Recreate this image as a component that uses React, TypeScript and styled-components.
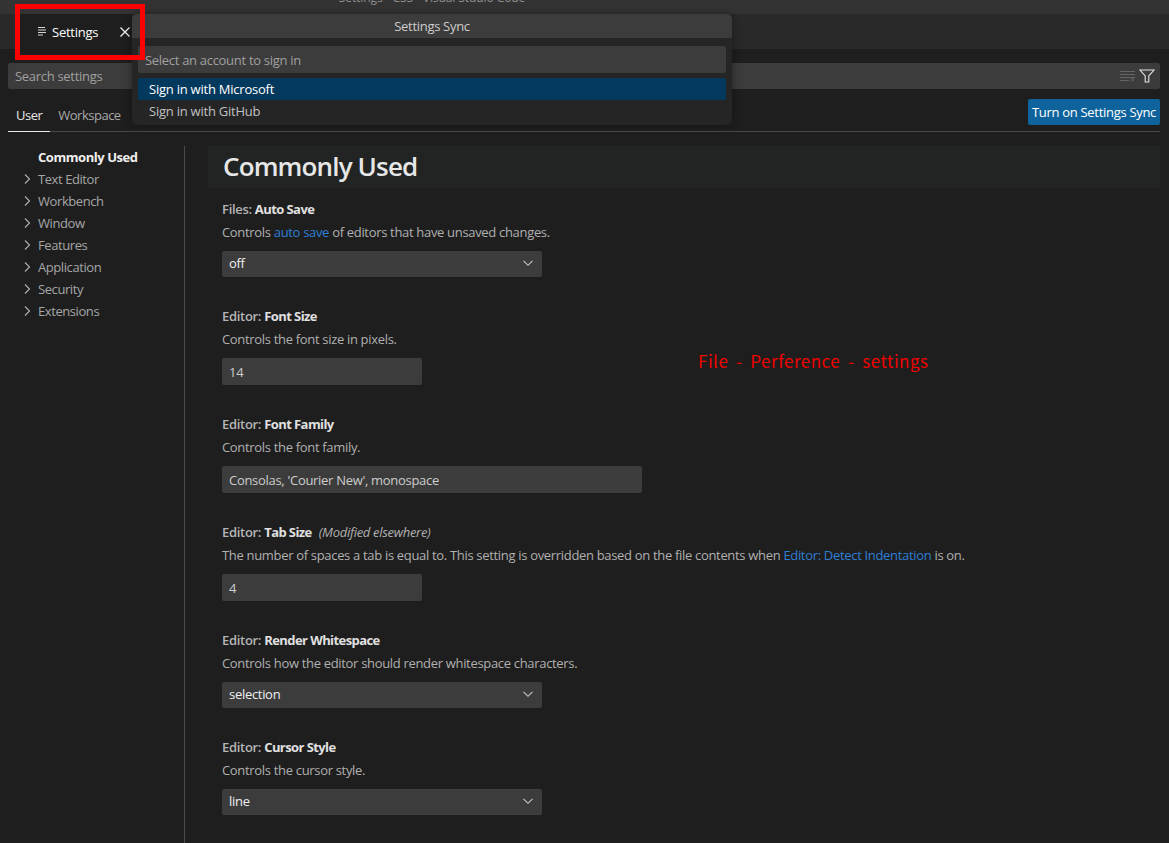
import React from "react";
import styled, { createGlobalStyle } from "styled-components";

const Global = createGlobalStyle`
  html, body { margin: 0; padding: 0; background: #1e1e1e; }
  body { font-family: "Open Sans", "Noto Sans", sans-serif; font-size: 13px; color: #cccccc; overflow: hidden; }
  * { box-sizing: border-box; }
`;
const Page = styled.div`position: relative; width: 1169px; height: 843px; overflow: hidden; background: #1e1e1e; display: flex; flex-direction: column;`;
const TitleBar = styled.div`height: 14px; flex: none; background: #333333; overflow: hidden; display: flex; justify-content: center; padding-right: 305px; color: #8f8f8f; font-size: 12px; line-height: 14px; letter-spacing: -0.08px;`;
const TitleText = styled.span`margin-top: -9px;`;
const TabStrip = styled.div`height: 35px; flex: none; background: #292929; display: flex; padding-left: 19px;`;
const Tab = styled.div`width: 113px; background: #1e1e1e; color: #fff; display: flex; align-items: center; padding-left: 18px; gap: 5px; font-size: 13px; letter-spacing: -0.25px;`;
const TabClose = styled.span`margin-left: 14px; display: flex; flex: none;`;
const Editor = styled.div`flex: 1; min-height: 0; padding: 14px 9px 0 8px; display: flex; flex-direction: column;`;
const SearchBar = styled.div`height: 26px; flex: none; background: #3c3c3c; border-radius: 2px; display: flex; align-items: center; padding: 0 5px 0 7px; color: #a0a0a0; letter-spacing: -0.3px;`;
const SearchText = styled.span`flex: 1;`;
const SearchIcons = styled.div`display: flex; gap: 3px; align-items: center;`;
const TabsRow = styled.div`height: 43px; flex: none; border-bottom: 1px solid #484848; display: flex; align-items: flex-end; justify-content: space-between;`;
const ScopeTabs = styled.div`display: flex; align-self: stretch; align-items: flex-end;`;
const ScopeTab = styled.div<{ $active?: boolean }>`height: 32px; padding: 5px 8px 0; color: ${p => p.$active ? "#e7e7e7" : "#a8a8a8"}; letter-spacing: -0.5px; margin-bottom: -1px; border-bottom: 1px solid ${p => p.$active ? "#e7e7e7" : "transparent"}; line-height: 20px;`;
const SyncButton = styled.div`width: 132px; height: 26px; margin-bottom: 6px; background: #0e639c; color: #fff; border-radius: 2px; display: flex; align-items: center; justify-content: center; white-space: nowrap; letter-spacing: -0.3px;`;
const Body = styled.div`flex: 1; display: flex; margin-top: 14px; min-height: 0;`;
const Tree = styled.div`width: 177px; flex: none; border-right: 1px solid #4a4a4a;`;
const TreeHead = styled.div`height: 22px; padding-left: 30px; line-height: 22px; color: #f0f0f0; font-weight: 700; letter-spacing: -0.45px;`;
const TreeRow = styled.div`height: 22px; display: flex; align-items: center; padding-left: 11px; color: #a6a6a6; letter-spacing: -0.42px; line-height: 22px;`;
const Twist = styled.span`width: 19px; display: flex; color: #b0b0b0;`;
const Content = styled.div`flex: 1; padding-left: 23px; min-width: 0;`;
const SectionHeader = styled.h2`margin: 0; height: 42px; background: #212423; font-size: 26px; font-weight: 600; color: #e7e7e7; padding-left: 15px; line-height: 41px; letter-spacing: -0.85px;`;
const List = styled.div`padding: 10px 0 0 14px; display: flex; flex-direction: column;`;
const Setting = styled.div<{ $h: number }>`height: ${p => p.$h}px; flex: none; display: flex; flex-direction: column; align-items: flex-start;`;
const Label = styled.div`height: 22px; line-height: 22px; font-weight: 600; color: #b5b5b5; letter-spacing: -0.3px; white-space: nowrap;`;
const LabelStrong = styled.span`color: #e0e0e0; font-weight: 700; letter-spacing: -0.58px;`;
const Note = styled.em`font-weight: 400; font-size: 13px; color: #b0b0b0; margin-left: 7px; letter-spacing: -0.3px;`;
const Desc = styled.div`height: 22px; line-height: 22px; margin-top: 1px; color: #b0b0b0; letter-spacing: -0.32px; white-space: nowrap;`;
const Link = styled.span`color: #2f7fd6;`;
const Select = styled.div`width: 320px; height: 26px; margin-top: 8px; background: #3c3c3c; border-radius: 2px; display: flex; align-items: center; justify-content: space-between; padding: 0 6px 2px 7px; color: #f0f0f0; letter-spacing: -0.3px;`;
const TextBox = styled.div<{ $w: number }>`width: ${p => p.$w}px; height: 27px; margin-top: 8px; background: #3c3c3c; border-radius: 2px; display: flex; align-items: center; padding: 0 7px; color: #cccccc; letter-spacing: -0.3px; white-space: nowrap;`;
const Annotation = styled.div`position: absolute; left: 698px; top: 349px; color: #f00000; font-family: "Noto Sans CJK KR", "Noto Sans", sans-serif; font-size: 17px; line-height: 23px; letter-spacing: 0.5px; word-spacing: 3.5px; white-space: pre;`;
const RedBox = styled.div`position: absolute; left: 15px; top: 4px; width: 130px; height: 56px; border: 5px solid #ff0000; z-index: 3;`;
const Picker = styled.div`position: absolute; left: 132px; top: 14px; width: 600px; height: 111px; background: #252526; border-radius: 5px; box-shadow: 0 0 8px rgba(0,0,0,.36); overflow: hidden; z-index: 2;`;
const PickerTitle = styled.div`height: 24px; background: #3c3c3c; color: #cccccc; text-align: center; line-height: 25px; letter-spacing: -0.3px;`;
const PickerInput = styled.div`height: 27px; margin: 8px 6px 5px; background: #3c3c3c; border-radius: 2px; padding: 0 7px; line-height: 28px; color: #a0a0a0; letter-spacing: -0.3px;`;
const PickerRow = styled.div<{ $on?: boolean }>`height: 22px; margin: 0 6px; padding-left: 11px; line-height: 22px; border-radius: 2px; background: ${p => p.$on ? "#04395e" : "transparent"}; color: ${p => p.$on ? "#fff" : "#c0c0c0"}; letter-spacing: -0.23px;`;
const TabGlyph = styled.svg`flex: none;`;

const Chevron = () => (
  <svg width="16" height="16" viewBox="0 0 16 16" fill="none" stroke="currentColor" strokeWidth="1.1"><path d="M6 3.5 10.5 8 6 12.5" /></svg>
);
const Down = () => (
  <svg width="16" height="16" viewBox="0 0 16 16" fill="none" stroke="#c8c8c8" strokeWidth="1.1"><path d="M3.5 5.8 8 10.3l4.5-4.5" /></svg>
);
const ListIcon = () => (
  <TabGlyph width="10" height="11" viewBox="0 0 10 11" stroke="#d4d4d4" strokeWidth="1.1" fill="none"><path d="M1 1.5h7M1 4h8M1 6.5h8M1 9h5" /></TabGlyph>
);
const CloseIcon = () => (
  <svg width="16" height="16" viewBox="0 0 16 16" stroke="#f0f0f0" strokeWidth="1.3" fill="none"><path d="M3.5 3.5l9 9M12.5 3.5l-9 9" /></svg>
);
const ClearIcon = () => (
  <svg width="16" height="12" viewBox="0 0 16 12" stroke="#646464" strokeWidth="1" fill="none"><path d="M0 1.5h15M0 4.5h15M0 7.5h15M0 10.5h9M11 8l3 3.5M14 8l-3 3.5" /></svg>
);
const FilterIcon = () => (
  <svg width="16" height="14" viewBox="0 0 16 14" stroke="#e4e4e4" strokeWidth="1.1" fill="none"><path d="M1 1h14L9.8 7v6H6.2V7z" /></svg>
);

const tree = ["Text Editor", "Workbench", "Window", "Features", "Application", "Security", "Extensions"];

export default function App() {
  return (
    <Page>
      <Global />
      <TitleBar><TitleText>Settings - CSS - Visual Studio Code</TitleText></TitleBar>
      <TabStrip>
        <Tab><ListIcon />Settings<TabClose><CloseIcon /></TabClose></Tab>
      </TabStrip>
      <Editor>
        <SearchBar>
          <SearchText>Search settings</SearchText>
          <SearchIcons><ClearIcon /><FilterIcon /></SearchIcons>
        </SearchBar>
        <TabsRow>
          <ScopeTabs>
            <ScopeTab $active>User</ScopeTab>
            <ScopeTab>Workspace</ScopeTab>
          </ScopeTabs>
          <SyncButton>Turn on Settings Sync</SyncButton>
        </TabsRow>
        <Body>
          <Tree>
            <TreeHead>Commonly Used</TreeHead>
            {tree.map(t => <TreeRow key={t}><Twist><Chevron /></Twist>{t}</TreeRow>)}
          </Tree>
          <Content>
            <SectionHeader>Commonly Used</SectionHeader>
            <List>
              <Setting $h={107}>
                <Label>Files: <LabelStrong>Auto Save</LabelStrong></Label>
                <Desc>Controls <Link>auto save</Link> of editors that have unsaved changes.</Desc>
                <Select>off<Down /></Select>
              </Setting>
              <Setting $h={108}>
                <Label>Editor: <LabelStrong>Font Size</LabelStrong></Label>
                <Desc>Controls the font size in pixels.</Desc>
                <TextBox $w={200}>14</TextBox>
              </Setting>
              <Setting $h={108}>
                <Label>Editor: <LabelStrong>Font Family</LabelStrong></Label>
                <Desc>Controls the font family.</Desc>
                <TextBox $w={420}>Consolas, 'Courier New', monospace</TextBox>
              </Setting>
              <Setting $h={108}>
                <Label>Editor: <LabelStrong>Tab Size</LabelStrong><Note>(Modified elsewhere)</Note></Label>
                <Desc>The number of spaces a tab is equal to. This setting is overridden based on the file contents when <Link>Editor: Detect Indentation</Link> is on.</Desc>
                <TextBox $w={200}>4</TextBox>
              </Setting>
              <Setting $h={107}>
                <Label>Editor: <LabelStrong>Render Whitespace</LabelStrong></Label>
                <Desc>Controls how the editor should render whitespace characters.</Desc>
                <Select>selection<Down /></Select>
              </Setting>
              <Setting $h={107}>
                <Label>Editor: <LabelStrong>Cursor Style</LabelStrong></Label>
                <Desc>Controls the cursor style.</Desc>
                <Select>line<Down /></Select>
              </Setting>
            </List>
          </Content>
        </Body>
      </Editor>
      <Picker>
        <PickerTitle>Settings Sync</PickerTitle>
        <PickerInput>Select an account to sign in</PickerInput>
        <PickerRow $on>Sign in with Microsoft</PickerRow>
        <PickerRow>Sign in with GitHub</PickerRow>
      </Picker>
      <RedBox />
      <Annotation>File - Perference - settings</Annotation>
    </Page>
  );
}
